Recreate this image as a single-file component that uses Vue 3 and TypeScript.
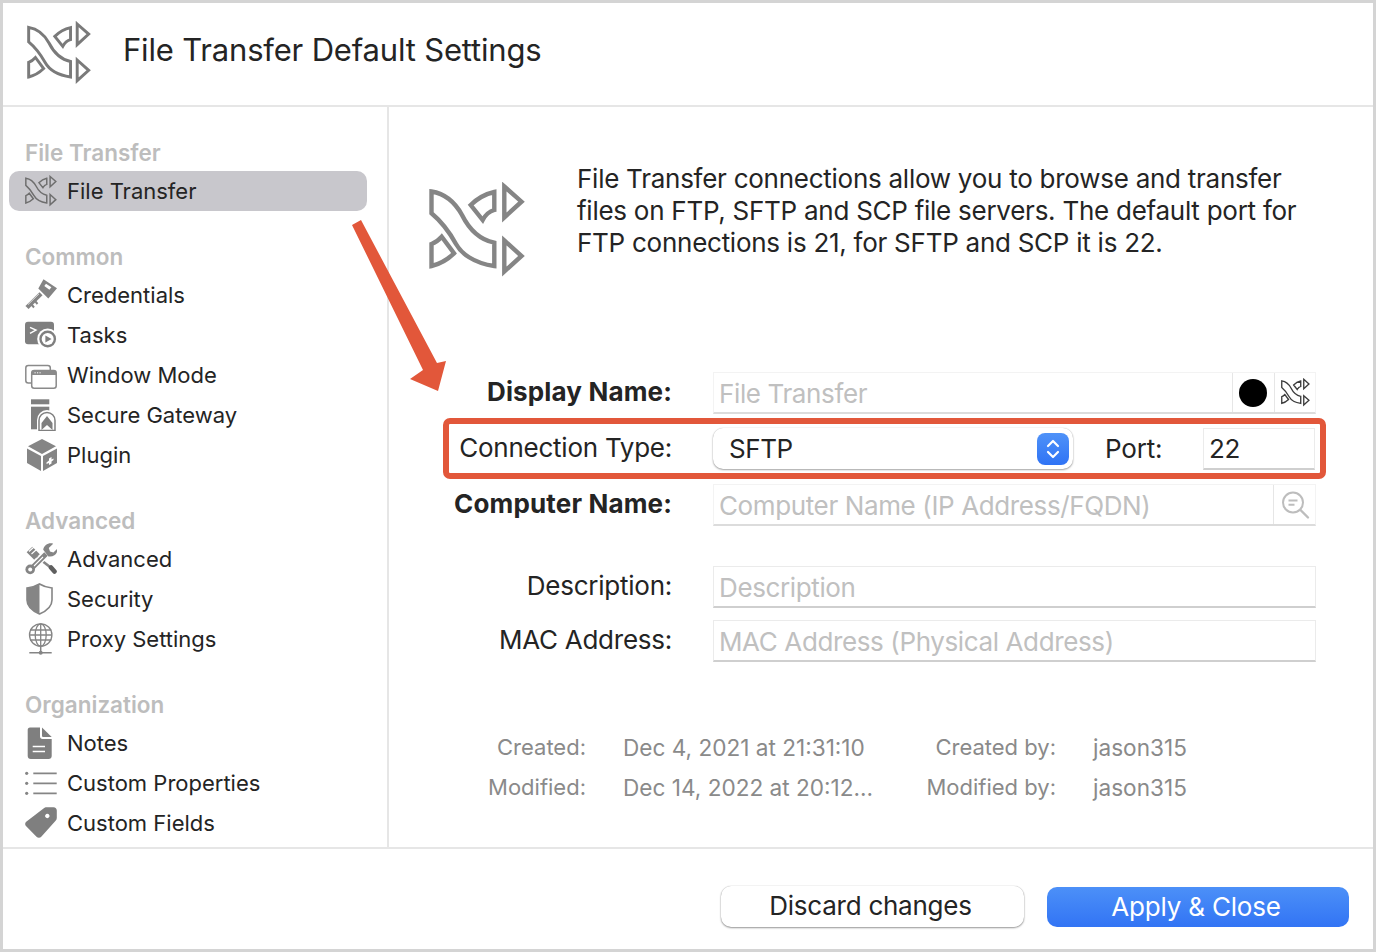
<script setup lang="ts">
interface Item { label: string; icon: string; active?: boolean }
interface Group { title: string; items: Item[] }

const groups: Group[] = [
  { title: 'File Transfer', items: [{ label: 'File Transfer', icon: 'logo', active: true }] },
  {
    title: 'Common',
    items: [
      { label: 'Credentials', icon: 'key' },
      { label: 'Tasks', icon: 'tasks' },
      { label: 'Window Mode', icon: 'windows' },
      { label: 'Secure Gateway', icon: 'gateway' },
      { label: 'Plugin', icon: 'plugin' },
    ],
  },
  {
    title: 'Advanced',
    items: [
      { label: 'Advanced', icon: 'tools' },
      { label: 'Security', icon: 'shield' },
      { label: 'Proxy Settings', icon: 'globe' },
    ],
  },
  {
    title: 'Organization',
    items: [
      { label: 'Notes', icon: 'note' },
      { label: 'Custom Properties', icon: 'list' },
      { label: 'Custom Fields', icon: 'tag' },
    ],
  },
]

const meta: string[][] = [
  ['Created:', 'Dec 4, 2021 at 21:31:10', 'Created by:', 'jason315'],
  ['Modified:', 'Dec 14, 2022 at 20:12…', 'Modified by:', 'jason315'],
]
</script>

<template>
  <div class="window">
    <svg class="defs" aria-hidden="true">
      <symbol id="logo" viewBox="0 0 96 96">
        <g fill="none" stroke="currentColor" stroke-width="4.4" stroke-linejoin="miter">
          <path d="M2.5 9.5C18 12 27 22 33 33C38 43 47 57 65.3 60.7V84C44 81 32 71 27 62C22 53 13 40 2.5 31.3Z" />
          <path d="M65.3 10V28Q58 30 53.7 38L41.7 23Q52 13 65.3 10Z" />
          <path d="M2.5 84V62Q8 60 12.7 54.7L25 71.3Q15 81 2.5 84Z" />
          <path d="M75.3 4.5L92.5 19.7L75.3 35.5Z" />
          <path d="M75.3 58.5L92.5 74L75.3 89.5Z" />
        </g>
      </symbol>
      <symbol id="key" viewBox="0 0 32 32">
        <path fill="#848484" fill-rule="evenodd" d="M18.5 0.3L32 9.3L23.3 19.5L13.3 9.5ZM21 4.7L26.4 8.3L24.4 10.8L19.3 7Z" />
        <path fill="none" stroke="#848484" stroke-width="4.4" d="M16 14.8L2 28.5" />
        <path fill="none" stroke="#e2e2e2" stroke-width="1" d="M14 14.8L3 25.6" />
        <path fill="none" stroke="#848484" stroke-width="2" d="M6.5 25.5L9 28.5M10 22L12.5 25" />
      </symbol>
      <symbol id="tasks" viewBox="0 0 32 32">
        <rect x="0" y="2.7" width="29" height="22.5" rx="3" fill="#7f7f7f" />
        <path d="M5 8.3L11 11L5 14.3" fill="none" stroke="#fff" stroke-width="1.4" />
        <circle cx="22.7" cy="20" r="10.5" fill="#fff" />
        <circle cx="22.7" cy="20" r="8.4" fill="#7f7f7f" />
        <circle cx="22.7" cy="20" r="6" fill="#fff" />
        <path d="M20.4 16.6L26.6 20L20.4 23.4Z" fill="#7f7f7f" />
      </symbol>
      <symbol id="windows" viewBox="0 0 32 32">
        <rect x="0.8" y="6.5" width="24.5" height="17.5" rx="2.5" fill="#fff" stroke="#8a8a8a" stroke-width="1.5" />
        <rect x="6.7" y="11.5" width="24.5" height="17.8" rx="2.5" fill="#fff" stroke="#8a8a8a" stroke-width="1.5" />
        <path d="M6.7 14a2.5 2.5 0 0 1 2.5-2.5H28.7a2.5 2.5 0 0 1 2.5 2.5V16H6.7Z" fill="#8a8a8a" />
        <path d="M9.5 13.8h1.2M12 13.8h1.2M14.5 13.8h1.2" stroke="#fff" stroke-width="1" />
      </symbol>
      <symbol id="gateway" viewBox="0 0 32 32">
        <rect x="6" y="0.3" width="18.3" height="5" fill="#7f7f7f" />
        <rect x="6" y="7.7" width="18.3" height="22.6" fill="#7f7f7f" />
        <path d="M12 32V21a10 10 0 0 1 20 0V32Z" fill="#fff" />
        <path d="M14 31.5V21.5a8 8 0 0 1 16 0V31.5Z" fill="none" stroke="#7f7f7f" stroke-width="1.5" />
        <path d="M16.5 31V24L22 17L27.5 24V31L22 26Z" fill="#7f7f7f" />
      </symbol>
      <symbol id="plugin" viewBox="0 0 32 32">
        <path d="M17 0L31 7.3L17 15L3 7.3Z" fill="#858585" />
        <path d="M2 9.5L16 17V32L2 24Z" fill="#858585" />
        <path d="M32 9.5L18 17V32L32 24Z" fill="#858585" />
        <path d="M21.5 23.5L24 21.5V19.5L26.5 18V20.5L28.5 19.5V21L26.5 22.5V24.5L24 26V24L21.5 25Z" fill="#fff" />
      </symbol>
      <symbol id="tools" viewBox="0 0 32 32">
        <path d="M4.5 6.5L12 14" fill="none" stroke="#858585" stroke-width="8" />
        <path d="M4 8.5L9 4M6.5 11L11.5 6.5" stroke="#fff" stroke-width="1.1" />
        <path d="M12 14L27 25.5" fill="none" stroke="#858585" stroke-width="2.6" />
        <path d="M26 24.5L29.5 28.5" fill="none" stroke="#5f5f5f" stroke-width="4.6" stroke-linecap="round" />
        <path d="M6 26L21 11" fill="none" stroke="#fff" stroke-width="7.5" />
        <path d="M6 26L21 11" fill="none" stroke="#858585" stroke-width="5" />
        <path d="M9 23L18 14" fill="none" stroke="#fff" stroke-width="1.1" />
        <path fill="#858585" d="M18.2 6.8C19 2 24 -0.8 28.2 0.8L23.8 5L25 8.4L28.4 9.4L32.4 5.6C33 10.6 28.4 14.6 23.4 13.4Z" />
        <circle cx="5.2" cy="26.4" r="4.8" fill="#858585" />
        <circle cx="5.2" cy="26.4" r="2" fill="#fff" />
      </symbol>
      <symbol id="shield" viewBox="0 0 32 32">
        <path d="M14.5 1C10.5 3.5 6.5 4.5 2 5V17C2 23.5 7.5 28 14.5 31C21.5 28 27 23.5 27 17V5C22.5 4.5 18.5 3.5 14.5 1Z" fill="#fff" stroke="#858585" stroke-width="1.6" />
        <path d="M14.5 1C10.5 3.5 6.5 4.5 2 5V17C2 23.5 7.5 28 14.5 31Z" fill="#858585" />
      </symbol>
      <symbol id="globe" viewBox="0 0 32 32">
        <g fill="none" stroke="#858585" stroke-width="1.3">
          <circle cx="15.7" cy="12" r="11.2" />
          <ellipse cx="15.7" cy="12" rx="5.5" ry="11.2" />
          <path d="M15.7 0.8V23.2M5 7H26.4M5 17H26.4M4.5 12H26.9" />
          <path d="M15.7 23.2V29.7M4.3 29.7H26.7" stroke-width="1.5" />
        </g>
        <circle cx="15.7" cy="29.7" r="2" fill="#858585" />
      </symbol>
      <symbol id="note" viewBox="0 0 32 32">
        <path d="M5 0.5H15V9.5C15 11 16 12 17.5 12H26.7V29C26.7 30.7 25.4 32 23.7 32H5.7C4 32 2.7 30.7 2.7 29V3C2.7 1.5 3.5 0.5 5 0.5Z" fill="#7f7f7f" />
        <path d="M17 0.5L26.7 10H18.5C17.5 10 17 9.5 17 8.5Z" fill="#7f7f7f" />
        <path d="M7.7 19.5H20M7.7 24.5H20" stroke="#fff" stroke-width="1.6" />
      </symbol>
      <symbol id="list" viewBox="0 0 32 32">
        <path d="M8.3 6.3H31.7M8.3 16.3H31.7M8.3 26.3H31.7" stroke="#858585" stroke-width="1.7" />
        <circle cx="1.7" cy="6.3" r="1.6" fill="#858585" />
        <circle cx="1.7" cy="16.3" r="1.6" fill="#858585" />
        <circle cx="1.7" cy="26.3" r="1.6" fill="#858585" />
      </symbol>
      <symbol id="tag" viewBox="0 0 32 32">
        <path fill="#7f7f7f" fill-rule="evenodd" d="M18.5 1.5C19.5 0.6 20.5 0.3 21.5 0.3H28.5C30.5 0.3 31.8 1.6 31.8 3.5V11C31.8 12 31.4 13 30.6 13.8L16.5 29.5C15 31.2 13 31.2 11.5 29.7L1.2 19.3C-0.2 18 -0.2 16 1.2 14.7ZM22.3 6.8a2.2 2.2 0 1 0 0.01 0Z" />
      </symbol>
    </svg>

    <header class="header">
      <svg class="header-icon"><use href="#logo" /></svg>
      <h1 class="title">File Transfer Default Settings</h1>
    </header>

    <div class="body">
      <nav class="sidebar">
        <section v-for="group in groups" :key="group.title" class="group">
          <div class="group-title">{{ group.title }}</div>
          <div v-for="item in group.items" :key="item.label" class="nav-row" :class="{ active: item.active }">
            <svg class="nav-icon"><use :href="'#' + item.icon" /></svg>
            <span>{{ item.label }}</span>
          </div>
        </section>
      </nav>

      <main class="main">
        <div class="intro">
          <svg class="intro-icon"><use href="#logo" /></svg>
          <p class="intro-text">
            File Transfer connections allow you to browse and transfer<br />
            files on FTP, SFTP and SCP file servers. The default port for<br />
            FTP connections is 21, for SFTP and SCP it is 22.
          </p>
        </div>

        <div class="form">
          <div class="form-block">
            <label class="form-label strong">Display Name:</label>
            <div class="field faint">
              <span class="placeholder grow">File Transfer</span>
              <span class="cell dot-cell"><i class="dot"></i></span>
              <span class="cell icon-cell"><svg class="cell-logo"><use href="#logo" /></svg></span>
            </div>

            <label class="form-label">Connection Type:</label>
            <div class="conn">
              <div class="select">
                <span class="grow">SFTP</span>
                <span class="stepper">
                  <svg width="18" height="26" viewBox="0 0 18 26" fill="none" stroke="#fff" stroke-width="2.2" stroke-linecap="round" stroke-linejoin="round">
                    <path d="M4 10L9 5L14 10" />
                    <path d="M4 16L9 21L14 16" />
                  </svg>
                </span>
              </div>
              <span class="port-label">Port:</span>
              <div class="field port"><span class="value">22</span></div>
            </div>

            <label class="form-label strong">Computer Name:</label>
            <div class="field faint">
              <span class="placeholder grow">Computer Name (IP Address/FQDN)</span>
              <span class="cell search">
                <svg width="30" height="30" viewBox="0 0 30 30" fill="none" stroke="#bdbdbd" stroke-width="2">
                  <circle cx="13" cy="12.5" r="10" />
                  <path d="M20.5 20L28 27.5" stroke-linecap="round" stroke-width="2.4" />
                  <path d="M8.5 10.5H17.5M8.5 14.8H14.5" />
                </svg>
              </span>
            </div>
          </div>

          <div class="form-block second">
            <label class="form-label">Description:</label>
            <div class="field"><span class="placeholder">Description</span></div>
            <label class="form-label">MAC Address:</label>
            <div class="field"><span class="placeholder">MAC Address (Physical Address)</span></div>
          </div>

          <div class="highlight"></div>
        </div>

        <div class="meta">
          <template v-for="row in meta" :key="row[0]">
            <span class="meta-label">{{ row[0] }}</span>
            <span class="meta-value">{{ row[1] }}</span>
            <span class="meta-label">{{ row[2] }}</span>
            <span class="meta-value">{{ row[3] }}</span>
          </template>
        </div>
      </main>
    </div>

    <footer class="footer">
      <button class="btn plain">Discard changes</button>
      <button class="btn primary">Apply &amp; Close</button>
    </footer>

    <svg class="arrow" width="110" height="190" viewBox="0 0 110 190">
      <path d="M2 8L11 3L87 146L96 144L88 174L60 162L73 153Z" fill="#e2573a" />
    </svg>
  </div>
</template>

<style>
html, body { margin: 0; background: #fff; }
</style>

<style scoped>
.window {
  position: relative;
  box-sizing: border-box;
  width: 1376px;
  height: 952px;
  border: 3px solid #d4d4d4;
  background: #fff;
  display: flex;
  flex-direction: column;
  overflow: hidden;
  font-family: Inter, "Liberation Sans", sans-serif;
  color: #242424;
}
.defs { position: absolute; width: 0; height: 0; }
.header {
  flex: none;
  height: 102px;
  border-bottom: 2px solid #e6e6e6;
  display: flex;
  align-items: center;
  padding-left: 24px;
}
.header-icon { width: 64px; height: 64px; color: #7a7a7a; margin-top: -3px; }
.title { margin: 0 0 10px 32px; font-size: 31px; font-weight: 400; letter-spacing: -0.18px; }
.body { flex: 1; display: flex; min-height: 0; }
.sidebar {
  box-sizing: border-box;
  flex: none;
  width: 386px;
  border-right: 2px solid #e6e6e6;
  padding: 26px 20px 0 6px;
  display: flex;
  flex-direction: column;
  gap: 26px;
  overflow: hidden;
}
.group-title {
  height: 38px;
  line-height: 39px;
  padding-left: 16px;
  box-sizing: border-box;
  font-size: 22.5px;
  font-weight: 600;
  color: #bdbdbd;
}
.nav-row {
  height: 40px;
  display: flex;
  align-items: center;
  gap: 10px;
  padding-left: 16px;
  font-size: 22px;
  border-radius: 10px;
}
.nav-row.active { background: #c8c7cc; }
.nav-icon { flex: none; width: 32px; height: 32px; color: #6e6e6e; }
.main {
  flex: 1;
  padding: 56px 57px 0 40px;
  box-sizing: border-box;
  min-width: 0;
}
.intro { display: flex; gap: 52px; }
.intro-icon { flex: none; width: 96px; height: 96px; margin-top: 19px; color: #858585; }
.intro-text { margin: 0; font-size: 26px; letter-spacing: -0.26px; line-height: 32px; white-space: nowrap; }
.form { position: relative; margin-top: 94px; }
.form-block {
  display: grid;
  grid-template-columns: 243px 1fr;
  column-gap: 41px;
  row-gap: 14px;
}
.form-block.second { margin-top: 40px; row-gap: 12px; }
.form-label {
  height: 42px;
  line-height: 40px;
  text-align: right;
  font-size: 26px;
  letter-spacing: -0.25px;
  white-space: nowrap;
}
.form-label.strong { font-weight: 700; letter-spacing: 0.15px; }
.field {
  box-sizing: border-box;
  height: 42px;
  display: flex;
  align-items: stretch;
  border: 1px solid #ebebeb;
  border-bottom: 2px solid #cfcfcf;
  font-size: 26px;
  letter-spacing: -0.38px;
  background: #fff;
}
.field.faint { border-color: #f3f3f3; border-bottom-color: #dcdcdc; }
.placeholder { padding-left: 5px; color: #c0c0c0; line-height: 42px; white-space: nowrap; }
.value { padding-left: 5px; line-height: 40px; }
.grow { flex: 1; }
.cell {
  box-sizing: border-box;
  flex: none;
  width: 42px;
  border-left: 1px solid #e6e6e6;
  display: flex;
  align-items: center;
  justify-content: center;
}
.dot-cell { padding-right: 1px; }
.icon-cell { width: 41px; }
.dot { width: 28px; height: 28px; border-radius: 50%; background: #000; }
.cell-logo { width: 29px; height: 29px; color: #3c3c3c; }
.conn { display: flex; align-items: flex-start; }
.select {
  box-sizing: border-box;
  flex: none;
  width: 360px;
  height: 41px;
  display: flex;
  align-items: center;
  padding: 0 4px 0 16px;
  border-radius: 10px;
  background: #fff;
  box-shadow: 0 1px 2px rgba(0, 0, 0, 0.35), 0 0 1px rgba(0, 0, 0, 0.25);
  font-size: 26px;
  letter-spacing: -0.4px;
}
.stepper {
  width: 32px;
  height: 32px;
  border-radius: 8px;
  background: linear-gradient(#4f92f8, #2f73f5);
  display: flex;
  align-items: center;
  justify-content: center;
}
.port-label { margin-left: 32px; width: 98px; font-size: 26px; letter-spacing: -0.2px; line-height: 42px; }
.field.port { width: 112px; }
.highlight {
  position: absolute;
  left: 14px;
  top: 46px;
  width: 883px;
  height: 61px;
  box-sizing: border-box;
  border: 6px solid #e2573a;
  border-radius: 7px;
  pointer-events: none;
}
.meta {
  margin-top: 65px;
  display: grid;
  grid-template-columns: 157px 260px 136px auto;
  column-gap: 37px;
  grid-auto-rows: 40px;
  align-items: center;
  font-size: 22px;
  color: #8a8a8a;
  white-space: nowrap;
}
.meta-label { text-align: right; }
.meta-value { font-size: 22.6px; }
.footer {
  flex: none;
  box-sizing: border-box;
  height: 102px;
  border-top: 2px solid #e6e6e6;
  display: flex;
  align-items: flex-start;
  justify-content: flex-end;
  gap: 23px;
  padding: 37px 24px 0 0;
}
.btn {
  height: 41px;
  width: 303px;
  border: 0;
  border-radius: 10px;
  font-family: inherit;
  font-size: 26px;
  letter-spacing: -0.25px;
  padding: 0 4px 2px 0;
}
.btn.plain {
  background: #fff;
  color: #242424;
  box-shadow: 0 1px 2px rgba(0, 0, 0, 0.4), 0 0 1px rgba(0, 0, 0, 0.3);
}
.btn.primary {
  width: 302px;
  height: 40px;
  margin-top: 1px;
  color: #fff;
  letter-spacing: -0.2px;
  background: linear-gradient(#4c90f8, #3274f4);
}
.arrow {
  position: absolute;
  left: 347px;
  top: 214px;
  pointer-events: none;
}
</style>
